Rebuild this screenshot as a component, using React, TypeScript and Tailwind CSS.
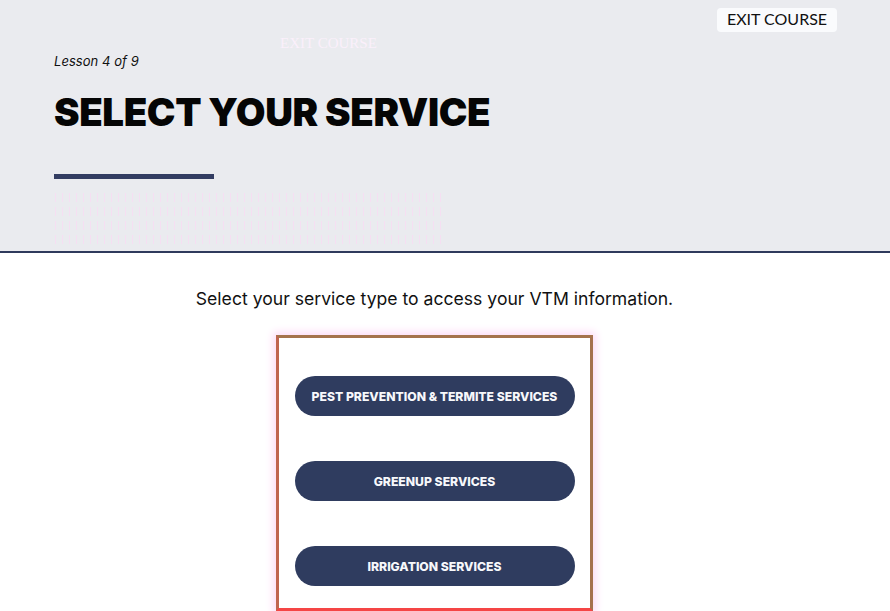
export default function App() {
  const services = ["PEST PREVENTION & TERMITE SERVICES", "GREENUP SERVICES", "IRRIGATION SERVICES"];
  const ghostLines = [1, 2, 3, 4];
  return (
    <div className="h-[611px] w-[890px] overflow-hidden bg-white font-['Inter',sans-serif] text-black">
      <header className="relative flex h-[253px] flex-col border-b-2 border-[#2f3a5c] bg-[#eaebef] pl-[54px] pr-[53px] pt-[8px]">
        <div className="flex justify-end">
          <span className="flex h-[24px] w-[120px] items-center justify-center rounded-[4px] bg-[#fafbfd] pb-[3px] font-['Lato',sans-serif] text-[16px] leading-none text-[#111]">
            EXIT COURSE
          </span>
        </div>
        <span className="absolute left-[280px] top-[36px] font-['Liberation_Serif',serif] text-[15px] leading-none text-[#fbf0fb]">
          EXIT COURSE
        </span>
        <p className="mt-[22px] text-[13px] italic leading-[14px] tracking-[0.05px] text-[#111]">Lesson 4 of 9</p>
        <h1 className="mt-[21px] whitespace-nowrap text-[38.4px] font-black leading-[46px] tracking-[-0.38px] text-[#050505]">
          SELECT YOUR SERVICE
        </h1>
        <div className="mt-[39px] h-[5px] w-[160px] bg-[#333d62]" />
        <div className="mt-[14px] flex flex-col gap-[5px] pl-[1px]">
          {ghostLines.map((n) => (
            <div
              key={n}
              className="h-[9px] w-[392px] bg-[repeating-linear-gradient(90deg,#f5dff2_0px,#f5dff2_1px,#eaebef_1px,#eaebef_7px)]"
            />
          ))}
        </div>
      </header>
      <main className="flex w-[869px] flex-col items-center">
        <p className="mt-[35px] text-[17.6px] leading-[22px] text-[#111]">
          Select your service type to access your VTM information.
        </p>
        <div className="mt-[25px] flex h-[276px] w-[317px] shrink-0 flex-col items-center gap-[45px] border-[3px] border-t-[#a5744c] border-r-[#a5724e] border-b-[#f54545] border-l-[#c0654f] pt-[38px] shadow-[0_0_8px_3px_#fddcf6]">
          {services.map((s) => (
            <button
              key={s}
              className="flex h-[40px] w-[280px] shrink-0 items-center justify-center rounded-full bg-[#2f3c5f] pt-[2px] text-[12.2px] font-extrabold text-[#f7f8fb]"
            >
              {s}
            </button>
          ))}
        </div>
      </main>
    </div>
  );
}
